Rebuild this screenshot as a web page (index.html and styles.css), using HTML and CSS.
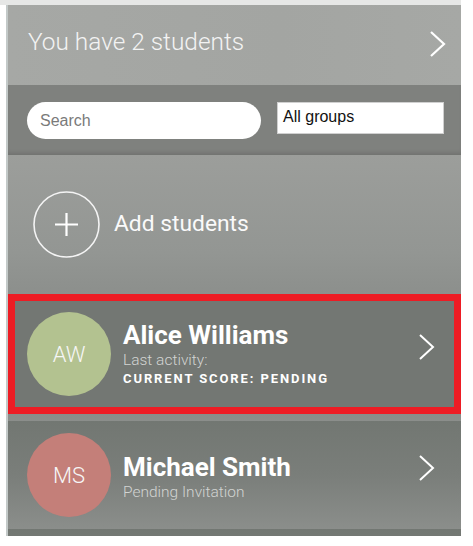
FILE: index.html
```html
<!DOCTYPE html>
<html>
<head>
<meta charset="utf-8">
<link rel="stylesheet" href="styles.css">
</head>
<body>
<div class="topband"></div>
<div class="app">
  <div class="header">
    <span class="header-title">You have 2 students</span>
    <svg class="chev" width="18" height="26" viewBox="0 0 18 26"><polyline points="2,1 15,13 2,25" fill="none" stroke="#fff" stroke-width="2.2"/></svg>
  </div>
  <div class="searchbar">
    <div class="search">Search</div>
    <div class="groups">All groups</div>
  </div>
  <div class="add">
    <div class="add-circle">
      <svg width="67" height="67" viewBox="0 0 67 67"><circle cx="33.5" cy="33.5" r="32.5" fill="none" stroke="#f4f4f4" stroke-width="1.6"/><path d="M22 33.5 H45 M33.5 22 V45" stroke="#fff" stroke-width="2.2"/></svg>
    </div>
    <span class="add-label">Add students</span>
  </div>
  <div class="row row-selected">
    <div class="avatar avatar-green">AW</div>
    <div class="info">
      <div class="name">Alice Williams</div>
      <div class="sub">Last activity:</div>
      <div class="score">CURRENT SCORE: PENDING</div>
    </div>
    <svg class="chev row-chev" width="18" height="26" viewBox="0 0 18 26"><polyline points="2,1 15,13 2,25" fill="none" stroke="#fff" stroke-width="2"/></svg>
  </div>
  <div class="row row-last">
    <div class="avatar avatar-red">MS</div>
    <div class="info info-last">
      <div class="name">Michael Smith</div>
      <div class="sub">Pending Invitation</div>
    </div>
    <svg class="chev row-chev" width="18" height="26" viewBox="0 0 18 26"><polyline points="2,1 15,13 2,25" fill="none" stroke="#fff" stroke-width="2"/></svg>
  </div>
</div>
</body>
</html>
```
FILE: styles.css
```css
html, body {
  margin: 0;
  padding: 0;
  background: #ffffff;
}
body {
  font-family: Roboto, "Liberation Sans", sans-serif;
  width: 473px;
  height: 546px;
  overflow: hidden;
}
.topband {
  width: 461px;
  height: 5px;
  background: #e6e7e6;
}
.app {
  margin-left: 6px;
  width: 453px;
  border-left: 2px solid #c3c9c8;
  background: #8f928f;
}
.header {
  height: 80px;
  background: linear-gradient(90deg, #a6a8a5, #a3a5a2 60%, #a6a8a5);
  display: flex;
  align-items: center;
  padding: 0 14px 0 20px;
  box-sizing: border-box;
  justify-content: space-between;
}
.header-title {
  font-weight: 300;
  font-size: 24.4px;
  color: #f3f3f3;
  margin-bottom: 8px;
}
.header .chev {
  margin-bottom: 2px;
}
.searchbar {
  height: 70px;
  background: #7f817e;
  display: flex;
  align-items: flex-start;
  padding: 17px 0 0 19px;
  box-sizing: border-box;
  gap: 16px;
  box-shadow: inset 0 -4px 4px -2px rgba(0,0,0,0.12);
}
.search {
  width: 234px;
  height: 37px;
  border-radius: 19px;
  background: #ffffff;
  box-sizing: border-box;
  padding-left: 13px;
  display: flex;
  align-items: center;
  font-family: "Liberation Sans", Arial, sans-serif;
  font-size: 16px;
  color: #7a7a7a;
}
.groups {
  width: 167px;
  height: 32px;
  background: #ffffff;
  box-sizing: border-box;
  border: 1px solid #d0d0d0;
  padding-left: 5px;
  display: flex;
  align-items: center;
  font-family: "Liberation Sans", Arial, sans-serif;
  font-size: 16px;
  color: #111;
  padding-bottom: 2px;
}
.add {
  height: 139px;
  background: linear-gradient(180deg, #9c9e9b, #939693 70%, #8c8f8c);
  display: flex;
  align-items: center;
  padding-left: 25px;
  box-sizing: border-box;
  gap: 14px;
}
.add-circle {
  width: 67px;
  height: 67px;
  display: flex;
}
.add-label {
  font-size: 22.8px;
  color: #fafafa;
  margin-bottom: 3px;
}
.row {
  display: flex;
  align-items: center;
  box-sizing: border-box;
  border: 7px solid transparent;
  padding-left: 12px;
  padding-right: 18px;
}
.row-selected {
  height: 120px;
  border-color: #ed1c24;
  background: #737773;
}
.row-last {
  height: 122px;
  background: linear-gradient(180deg, #727772, #7a7e7a 50%, #8b8e8b);
}
.avatar {
  width: 84px;
  height: 84px;
  border-radius: 50%;
  flex: none;
  display: flex;
  align-items: center;
  justify-content: center;
  font-weight: 300;
  font-size: 22px;
  color: #f6f6f6;
}
.avatar-green { background: #b3c290; }
.avatar-red { background: #c47f79; }
.info {
  flex: 1;
  margin-left: 12px;
  color: #ffffff;
}
.info-last {
  margin-top: 4px;
}
.name {
  font-weight: 700;
  font-size: 26px;
  line-height: 30px;
}
.sub {
  font-weight: 300;
  font-size: 15.5px;
  line-height: 20px;
  color: #d2d4d2;
}
.score {
  font-weight: 700;
  font-size: 13px;
  letter-spacing: 1.9px;
  line-height: 18px;
}
.row-chev {
  flex: none;
  margin-bottom: 15px;
}
```
